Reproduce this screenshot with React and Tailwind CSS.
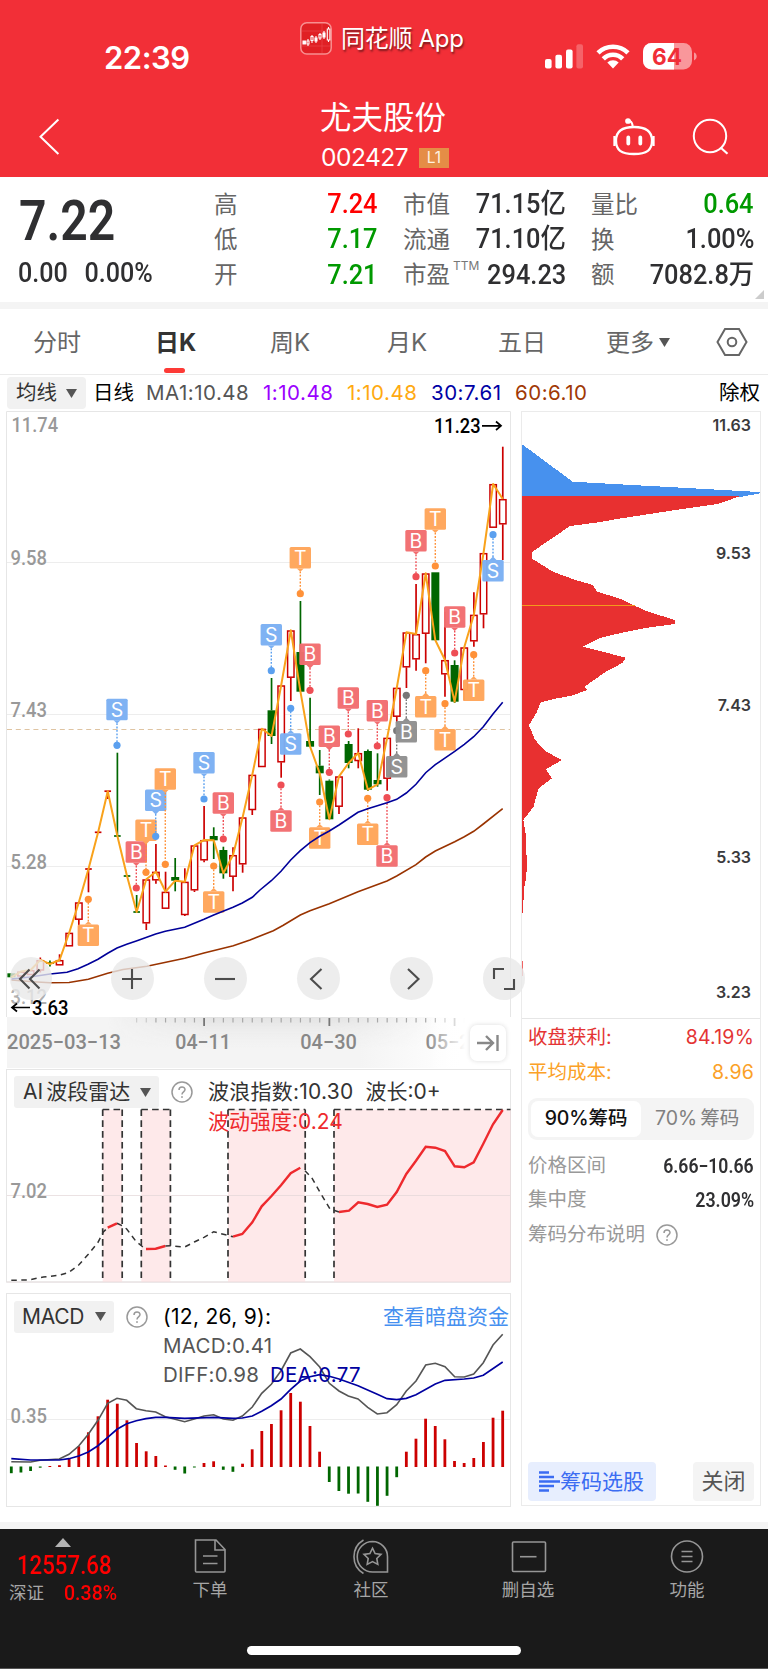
import React from "react";

const NUM = "font-['Roboto','Noto_Sans_CJK_SC',sans-serif] font-medium whitespace-nowrap";
const UI = "font-['Inter','Noto_Sans_CJK_SC',sans-serif]";

const RED = "#cc0000";
const GREEN = "#006600";
const xAt = (i) => 11.4 + i * 9.635;

// [up, body top, body bottom, wick top, wick bottom]
const CANDLES = [
  [0, 973.3, 977.3, 973, 978], [1, 971.5, 976.5, 971, 977], [1, 970, 975, 969, 975], [1, 960, 970.5, 957.5, 972.5],
  [0, 962, 964, 960.5, 966.5], [1, 960, 965.3, 954.3, 965.3], [1, 932.7, 946.3, 932.7, 946.3], [1, 902.3, 919.7, 902.3, 945],
  [1, 869, 869, 869, 892.3], [1, 832.3, 832.3, 832.3, 832.3], [1, 791.2, 791.2, 791.2, 799], [0, 836, 836, 752.7, 836],
  [0, 876, 876, 876, 876], [0, 912, 912, 895, 912], [1, 879.3, 923.3, 879.3, 930], [1, 871.7, 880.3, 844, 883.7],
  [1, 891.7, 908.7, 871.7, 908.7], [0, 877, 880.7, 858, 891.3], [1, 881.7, 915, 868.3, 916], [1, 845.3, 890.3, 845.3, 892],
  [1, 840, 860.3, 806, 862.3], [0, 836, 840.3, 827.3, 859], [0, 850, 873.3, 846.7, 878.7], [1, 855, 876.7, 847.3, 891.3],
  [1, 817.3, 864.3, 817.3, 872.7], [1, 774.7, 810, 774.7, 815], [1, 728.7, 767, 728.7, 767], [0, 710.3, 736, 678, 744],
  [1, 685.3, 762.3, 685.3, 777.7], [1, 630.3, 677.7, 630.3, 701], [0, 652, 691.7, 601, 691.7], [0, 741, 746.7, 697.7, 746.7],
  [0, 765.7, 773.3, 750, 795], [0, 780.7, 819.3, 779.5, 819.3], [1, 776.3, 806.7, 776.3, 814], [0, 744, 763, 741, 768.3],
  [1, 753, 761, 728.3, 768.3], [0, 751, 789.7, 749.5, 791], [0, 780, 784.3, 753.3, 786.7], [1, 737.7, 778.7, 737.7, 790.7],
  [1, 687.7, 716.7, 687.7, 723.3], [1, 632.3, 667.3, 632.3, 688], [1, 634, 659.3, 584, 670.7], [1, 573.3, 633.7, 573.3, 663.3],
  [0, 572.3, 640.3, 572.3, 640.3], [1, 660, 674.3, 611.7, 696.7], [0, 665, 701.7, 660.3, 703], [1, 647.3, 690, 647.3, 700.3],
  [1, 614.7, 641.3, 592.3, 646.7], [1, 553, 614.3, 553, 628.3], [1, 484, 527.7, 484, 527.7], [1, 499, 524.3, 446.7, 560],
];

const MA30 = "11.5,979 30,977 50,974 67,972.3 78,968.7 88,964.3 98,959.3 107.7,953.3 117,948 126.7,944.3 136.3,941 155.7,934 165.3,931.3 184.7,927.3 204,919.3 213.7,915 233,907.3 242.3,903 252.3,897.3 260,890 271.3,880.7 281,871.3 290.7,860 300.3,850.7 310,842.7 319.7,836.3 329.3,831 339,825 358,812.3 367.7,808.7 387,802.7 396.7,799.3 406.3,793 416,784.3 425.7,772.7 435.3,764.7 454.7,751.3 464.3,744.3 473.7,736.7 483.3,726.7 493,714 502.7,702.3";
const MA60 = "11.5,980 33,981.7 50,982.7 69,982.5 88.3,979.3 107.7,973.3 123,969.5 147,966.3 184.7,958.3 204,953 233.3,945.7 250,940 273.3,930.7 283.3,925.3 300.3,915 310,910.7 329.3,903.7 358,891.7 387,881 396.7,876 416,864.7 425.7,857 435.3,851 454.7,841.7 464.3,836.7 473.7,831.3 483.3,824 502.7,808.7";

// [letter, x, label centre y, dot y]
const MARKERS = [
  ["S", 117, 709.5, 745.3], ["T", 88.3, 935.3, 899.3], ["B", 136.3, 852, 888], ["T", 146, 830.3, 872.3], ["S", 155.7, 800.3, 836.3],
  ["T", 165.3, 779, 864.3], ["S", 204, 762.7, 799], ["B", 223.3, 803, 839], ["T", 213.7, 902, 866], ["T", 300.3, 557.7, 593.7],
  ["S", 271.3, 634.7, 670.7], ["B", 310, 654.3, 690.3], ["S", 290.7, 744, 708.3], ["B", 281, 821, 785], ["B", 329.3, 736.3, 772.3],
  ["B", 348.3, 698, 734], ["B", 377.3, 710.7, 746], ["T", 319.7, 838, 802], ["T", 367.7, 834.3, 798.3], ["B", 387, 856, 797.7],
  ["S", 396.7, 766.7, 730.7, 1], ["B", 406.3, 731.7, 695.3, 1], ["B", 416, 540.7, 576.7], ["T", 425.7, 706.7, 670.7],
  ["T", 435.3, 519, 566], ["T", 445, 739.7, 703.7], ["B", 454.7, 617, 653], ["T", 473.7, 690.3, 654.7], ["S", 493, 570.7, 534.7],
];
const MARKER_COLORS = { S: ["#7bb0f3", "#5ba0ef"], B: ["#f26d70", "#ee4e55"], T: ["#ffa55a", "#ff9138"], X: ["#8f8f8f", "#777777"] };

function Marker({ m }) {
  const [l, x, cy, dot, muted] = m;
  const [fill, ink] = MARKER_COLORS[muted ? "X" : l];
  const dir = dot > cy ? 1 : -1;
  const edge = cy + dir * 10.7;
  return (
    <g>
      <line x1={x} x2={x} y1={edge + dir * 3} y2={dot} stroke={ink} strokeWidth="1.4" strokeDasharray="1.8 1.6" />
      <circle cx={x} cy={dot} r="3.6" fill={ink} />
      <path d={`M${x - 3.5} ${edge} L${x} ${edge + dir * 3.4} L${x + 3.5} ${edge} Z`} fill={fill} />
      <rect x={x - 10.7} y={cy - 10.7} width="21.4" height="21.4" rx="1.5" fill={fill} opacity="0.97" />
      <text x={x} y={cy + 7} textAnchor="middle" fontSize="19.5" fill="#fff" fontFamily="Inter">{l}</text>
    </g>
  );
}

function Axis({ x, y, w, children, fill = "#999999" }) {
  return (
    <text x={x} y={y} textLength={w} lengthAdjust="spacingAndGlyphs" fontSize="20.5" fontWeight="500" fontFamily="Roboto" fill={fill}>{children}</text>
  );
}

function PriceChart() {
  return (
    <svg viewBox="6 411 505 606" width="505" height="606" className="block overflow-visible">
      <path d="M6.5 1017 V411.5 H510.5 V1017" fill="none" stroke="#e6e6e6" />
      <path d="M7 562.5 H510 M7 714.5 H510 M7 866.5 H510" stroke="#ededed" />
      <Axis x="11.5" y="431.7" w="46.5">11.74</Axis>
      <Axis x="10.5" y="565.3" w="36.5">9.58</Axis>
      <Axis x="10.5" y="717" w="36.5">7.43</Axis>
      <Axis x="10.5" y="869" w="36.5">5.28</Axis>
      <Axis x="10.5" y="1003.5" w="36.5" fill="#b0b0b0">3.12</Axis>
      <line x1="7" x2="510" y1="729.5" y2="729.5" stroke="#dfc4a2" strokeWidth="1.2" strokeDasharray="5 3.8" />
      {CANDLES.map(([up, t, b, h, l], i) => {
        const x = xAt(i);
        const c = up ? RED : GREEN;
        return (
          <g key={i} stroke={c} strokeWidth="1.7">
            {h < t && <line x1={x} x2={x} y1={h} y2={t} />}
            {l > b && <line x1={x} x2={x} y1={b} y2={l} />}
            {b - t < 1
              ? <line x1={x - 3.3} x2={x + 3.3} y1={t} y2={t} />
              : up
                ? <rect x={x - 3.2} y={t + 0.7} width="6.4" height={b - t - 1.2} fill="#fff" strokeWidth="1.5" />
                : <rect x={x - 4} y={t} width="8" height={b - t} fill={c} stroke="none" />}
          </g>
        );
      })}
      <polyline points={CANDLES.map(([up, t, b], i) => `${xAt(i)},${up ? t : b}`).join(" ")} fill="none" stroke="#f9a21b" strokeWidth="2" strokeLinejoin="round" />
      <polyline points={MA60} fill="none" stroke="#993300" strokeWidth="1.6" />
      {MARKERS.map((m, i) => <Marker key={i} m={m} />)}
      <polyline points={MA30} fill="none" stroke="#000099" strokeWidth="1.6" />
      <g stroke="#000" strokeWidth="1.7" fill="none">
        <path d="M30 1007.5 H12 M17 1003.5 L12 1007.5 L17 1011.5" />
        <path d="M482 425.8 H501 M496 421.5 L501 425.8 L496 430" />
      </g>
      <Axis x="32" y="1014.7" w="36.5" fill="#000">3.63</Axis>
      <Axis x="434" y="433" w="46.5" fill="#000">11.23</Axis>
    </svg>
  );
}

function RoundButton({ children, className = "" }) {
  return (
    <button className={`flex h-[42.6px] w-[42.6px] shrink-0 items-center justify-center rounded-full bg-[#e9e9e9]/80 ${className}`}>
      <svg width="42" height="42" viewBox="-21 -21 42 42" fill="none" stroke="#4c4c4c" strokeWidth="2.1">{children}</svg>
    </button>
  );
}

function DateStrip() {
  return (
    <div className="relative h-[51px] w-[505px] overflow-hidden pl-px">
      <svg width="504" height="51" viewBox="7 1017 504 51" className="block">
        <defs>
          <linearGradient id="strip" x1="0" x2="1" y1="0" y2="0">
            <stop offset="0" stopColor="#f4f4f4" /><stop offset="0.7" stopColor="#f4f4f4" /><stop offset="0.9" stopColor="#fff" />
          </linearGradient>
          <linearGradient id="shade" x1="0" x2="0" y1="0" y2="1">
            <stop offset="0" stopColor="#e2e2e2" /><stop offset="1" stopColor="#f0f0f0" stopOpacity="0" />
          </linearGradient>
          <linearGradient id="side" x1="0" x2="1" y1="0" y2="0">
            <stop offset="0.2" stopColor="#000" /><stop offset="0.4" stopColor="#fff" /><stop offset="0.65" stopColor="#fff" /><stop offset="0.85" stopColor="#000" />
          </linearGradient>
          <mask id="sideMask"><rect x="7" y="1017" width="504" height="51" fill="url(#side)" /></mask>
          <linearGradient id="fade" x1="0" x2="1" y1="0" y2="0">
            <stop offset="0" stopColor="#fff" stopOpacity="0" /><stop offset="0.85" stopColor="#fff" /><stop offset="1" stopColor="#fff" />
          </linearGradient>
        </defs>
        <rect x="7" y="1017" width="504" height="51" fill="url(#strip)" />
        <rect x="7" y="1017" width="504" height="32" fill="url(#shade)" mask="url(#sideMask)" />
        {Array.from({ length: 35 }, (_, k) => k + 13).map((i) => {
          const major = i === 20 || i === 33 || i === 46;
          return <line key={i} x1={xAt(i)} x2={xAt(i)} y1="1018" y2={major ? 1026 : 1022.5} stroke={major ? "#777" : "#a8a8a8"} strokeWidth={major ? 1.8 : 1.2} opacity={i < 15 ? 0.5 : 1} />;
        })}
        <Axis x="7" y="1048.7" w="114" fill="#888">2025−03−13</Axis>
        <Axis x="175.3" y="1048.7" w="55.5" fill="#888">04−11</Axis>
        <Axis x="300.3" y="1048.7" w="56.5" fill="#888">04−30</Axis>
        <Axis x="425.5" y="1048.7" w="56.5" fill="#888">05−22</Axis>
        <rect x="426" y="1017" width="46" height="51" fill="url(#fade)" />
        <rect x="466" y="1017" width="45" height="51" fill="#fff" />
      </svg>
      <button className="absolute right-[5px] top-[8px] flex h-9 w-9 items-center justify-center rounded-[7px] bg-white shadow-[0_0_5px_rgba(0,0,0,0.14)]">
        <svg width="24" height="20" viewBox="0 0 24 20" fill="none" stroke="#888" strokeWidth="2.4"><path d="M1 10 H17 M10 3 L17 10 L10 17 M21.5 2 V18" /></svg>
      </button>
    </div>
  );
}

const DASHED = ["11.3,1280.3 28.3,1280 43.3,1277 59.3,1275.3 69,1272.3 78.7,1265 88.3,1254.3 98,1242.3 103.3,1232 107.7,1227.7", "117,1223.3 122,1225.7 126.7,1229 136.3,1241.7 141.7,1246 146,1249", "165.3,1246 170.3,1245.7 184.7,1247 194.3,1242 204,1237.3 213.7,1231.7 223.3,1234.3 233,1236.7", "305,1170.7 311.7,1177.7 319.7,1191.7 330,1209 339,1212"];
const WAVES = ["107.7,1227.7 117,1223.3", "146,1249 155.7,1248.7 165.3,1246", "233,1236.7 242.3,1234 252.3,1222.3 261.7,1206.3 271.3,1196.3 281,1185.3 290.7,1173.3 300.3,1167.7", "339,1212 349,1210.7 358.3,1202.3 367.7,1204 377.3,1207 387,1204.7 396.7,1192 406.3,1174 416,1160.7 425.7,1146.7 435.3,1147.7 445,1151 454.7,1166.3 464.3,1167.3 473.7,1162.3 483.3,1143.7 493,1124.3 502.7,1110"];
const BANDS = [[102.7, 122.2], [141.3, 170.4], [228, 305.2], [334, 510.5]];

function RadarChart() {
  return (
    <svg viewBox="6 1069 505 214" width="505" height="214" className="absolute inset-0">
      <rect x="6.5" y="1069.5" width="504" height="212.5" fill="none" stroke="#e6e6e6" />
      {BANDS.map(([a, b]) => <rect key={a} x={a} y="1109.5" width={b - a} height="172.5" fill="#fee9ea" />)}
      <path d="M7 1195.5 H510 M6.5 1282 H510.5 V1109" stroke="#e2d6d7" strokeOpacity="0.7" fill="none" />
      <g stroke="#333" strokeWidth="1.7" strokeDasharray="6.6 4.2" fill="none">
        {BANDS.map(([a, b], i) => (
          <g key={a}>
            <path d={`M${a} 1109.5 H${b}`} />
            <path d={`M${a} 1109.5 V1282`} />
            {i < 3 && <path d={`M${b} 1109.5 V1282`} />}
          </g>
        ))}
      </g>
      {DASHED.map((p) => <polyline key={p} points={p} fill="none" stroke="#333" strokeWidth="1.5" strokeDasharray="5.5 4.5" />)}
      {WAVES.map((p) => <polyline key={p} points={p} fill="none" stroke="#ee2a2e" strokeWidth="2.4" />)}
      <Axis x="10.5" y="1198.3" w="36.5">7.02</Axis>
    </svg>
  );
}

const BARS = [-6.7, -6, -4.5, -1.2, 1, 1.8, 8, 20.7, 34.7, 50.7, 67.3, 63.3, 46.7, 24, 15.7, 11, 1.5, -3.3, -7, -1, 4, 5.7, -3.3, -5.3, 3.3, 17.7, 36, 43, 56.7, 74, 65.3, 41, 15.3, -15.5, -24.5, -27.2, -27, -35.3, -39.3, -29.3, -10.7, 15.3, 28.3, 48.3, 41, 27.7, 6, 4, 9, 25, 49.3, 56.3];
const DIFF = "11.3,1461.7 30.7,1462 40,1460.3 59.3,1459 69,1454.3 78.7,1446 88.3,1434.3 98,1420.3 107.7,1403.3 117,1398.3 126.7,1400.3 136.3,1408.7 146,1410.7 155.7,1412 165.3,1416.7 184.7,1421.7 194.3,1419 204,1416 213.7,1414.7 223.3,1419 233,1420.3 242.3,1416 252.3,1407 261.7,1393.3 271.3,1384.3 281,1370.7 290.7,1353 300.3,1349 310,1356.7 319.7,1367 329.3,1383.3 339,1391 348.3,1396 358,1399 367.7,1407.3 377.3,1414 387,1412.7 396.7,1404.7 406.3,1391 416,1381 425.7,1365 435.3,1363.3 445,1366.7 454.7,1376.7 464.3,1377 473.7,1374 483.3,1362.7 493,1345 502.7,1334.3";
const DEA = "11.3,1458.7 30.7,1460 59.3,1460 69,1458.7 78.7,1456 88.3,1452 98,1445.7 107.7,1437.3 117,1429.3 126.7,1423.7 136.3,1420.7 146,1418.7 155.7,1417.3 165.3,1417.3 184.7,1418.3 213.7,1417.3 233,1418.3 242.3,1418 252.3,1416 261.7,1411.3 271.3,1405.7 281,1399 290.7,1389.3 300.3,1381 310,1376.7 319.7,1374.7 329.3,1376.3 339,1379 358,1385.7 377.3,1394.3 387,1398.7 396.7,1399.7 406.3,1398.3 416,1394.7 435.3,1384 445,1380.3 464.3,1379 473.7,1378 483.3,1375.3 502.7,1362";

function MacdChart() {
  return (
    <svg viewBox="6 1293 505 214" width="505" height="214" className="absolute inset-0">
      <rect x="6.5" y="1293.5" width="504" height="213" fill="none" stroke="#e6e6e6" />
      <path d="M7 1419.5 H510" stroke="#ededed" />
      <Axis x="10.5" y="1423" w="36.5">0.35</Axis>
      {BARS.map((v, i) => (
        <rect key={i} x={xAt(i) - 1.5} y={v > 0 ? 1467 - v : 1466.5} width="2.8" height={Math.abs(v)} fill={v > 0 ? RED : GREEN} />
      ))}
      <polyline points={DIFF} fill="none" stroke="#555" strokeWidth="1.6" />
      <polyline points={DEA} fill="none" stroke="#0000a0" strokeWidth="1.7" />
    </svg>
  );
}

function Down({ className = "" }) {
  return <svg width="11" height="9" viewBox="0 0 11 9" className={`shrink-0 ${className}`}><path d="M0 0 H11 L5.5 9 Z" fill="#555" /></svg>;
}

function Help() {
  return (
    <svg width="22" height="22" viewBox="0 0 22 22" fill="none" stroke="#999" strokeWidth="1.5" className="shrink-0">
      <circle cx="11" cy="11" r="10" />
      <path d="M8 8.9 C8 5 14 5 14 8.6 C14 10.8 11 11 11 13.4" /><circle cx="11" cy="16" r="0.6" fill="#999" strokeWidth="0.8" />
    </svg>
  );
}

function ChipChart() {
  return (
    <svg viewBox="36 28 715 1534" preserveAspectRatio="none" width="238.3" height="606.5" className="absolute -top-px left-0" shapeRendering="crispEdges">
      <polygon fill="#4791ee" points="36,112 190,208 235,209 320,213 406,217 493,221 579,225 665,229 751,233 751,236 688,246 36,246" />
      <polygon fill="#e83030" points="36,244 688,244 625,263 540,273 485,280 400,291 345,298 260,310 180,319 67,384 67,402 130,435 195,455 248,468 262,485 335,504 400,531 494,557 494,567 420,575 345,587 270,602 218,624 348,652 338,665 290,686 224,725 231,734 185,748 140,755 92,765 80,790 57,823 75,860 110,890 155,911 108,934 126,957 86,982 70,1030 40,1062 47,1098 51,1180 48,1210 41,1240 40,1298 36,1298" />
      <rect x="36" y="1420" width="3" height="38" fill="#f06464" />
      <rect x="36" y="517.5" width="338" height="3.6" fill="#f39a1c" />
    </svg>
  );
}

function StatusBar() {
  return (
    <div className="flex h-[76px] items-start">
      <div className="w-[200px] shrink-0 pl-[104px] pt-[38.5px] text-[31px] font-semibold leading-[38px] tracking-[-0.5px]">22:39</div>
      <div className="flex w-[345px] pl-[100px] pt-[22px]">
        <svg width="32" height="33" viewBox="0 0 32 33" fill="none">
          <rect x="0.8" y="0.8" width="30.4" height="31.2" rx="6" fill="#e02024" stroke="#f88f90" strokeWidth="1.5" />
          <path d="M2 9 H30 M2 24 H30 M22 2 V31" stroke="#ea4547" strokeWidth="0.7" />
          <g stroke="#fff" strokeWidth="1.1">
            <path d="M8 17 V24 M12 13 V21 M16 14 V21 M20 11 V18 M24 9 V17 M28.5 5 V20" />
            <path d="M3 19 h2.4 v3 h-2.4z M15 16 h2 v3 h-2z M23 11 h2 v4 h-2z" fill="#fff" />
            <path d="M7 19 h2 v3 h-2z M11 14.5 h2 v4 h-2z M19 12.5 h2 v3.5 h-2z M27.3 7 h2.6 v11 h-2.6z" fill="#e02024" />
          </g>
        </svg>
        <span className="ml-[9px] whitespace-nowrap text-[24px] leading-[33px] tracking-[-0.3px] [text-shadow:1px_2px_2px_rgba(0,0,0,0.5)]">同花顺 App</span>
      </div>
      <svg width="155" height="30" viewBox="545 41 155 30" className="mt-[41px]">
        <g fill="#fff">
          <rect x="545" y="59" width="6.6" height="9.6" rx="2" /><rect x="555.4" y="54.7" width="6.6" height="13.9" rx="2" />
          <rect x="566" y="49.6" width="6.6" height="19" rx="2" /><rect x="576.4" y="44.3" width="6.6" height="24.3" rx="2" opacity="0.25" />
        </g>
        <g fill="none" stroke="#fff" strokeWidth="4.6">
          <path d="M598 52.9 A21.5 21.5 0 0 1 628 52.9" /><path d="M603.3 58.8 A13.5 13.5 0 0 1 622.7 58.8" />
        </g>
        <path d="M607.3 62.6 A8.2 8.2 0 0 1 618.7 62.6 L613 68.6 Z" fill="#fff" />
        <clipPath id="batt"><rect x="643" y="43" width="49" height="26.4" rx="8.5" /></clipPath>
        <g clipPath="url(#batt)"><rect x="643" y="43" width="49" height="27" fill="#f9979b" /><rect x="643" y="43" width="31" height="27" fill="#fff" /></g>
        <path d="M694 52.6 C697.6 53.8 697.6 59 694 60.4 Z" fill="#f9979b" />
        <text x="667" y="64.5" textAnchor="middle" fontFamily="Inter" fontWeight="700" fontSize="23.5" textLength="30" lengthAdjust="spacingAndGlyphs" fill="#f02e37">64</text>
      </svg>
    </div>
  );
}

function TitleBar() {
  return (
    <div className="flex h-[101px] items-start">
      <svg width="60" height="40" viewBox="0 0 60 40" className="mt-[40px] shrink-0" fill="none" stroke="#fff" strokeWidth="2"><path d="M58.4 3.5 L40.5 20.8 L58.4 38" /></svg>
      <div className="ml-[260px] w-[130px] pt-[21px]">
        <div className="whitespace-nowrap text-[31.5px] leading-[42px]">尤夫股份</div>
        <div className="flex items-center pl-px">
          <span className="w-[98px] text-[24.5px] leading-[37px] tracking-[-0.5px]">002427</span>
          <span className="flex h-5 w-[30px] shrink-0 items-center justify-center bg-[#e58d46] text-[15.5px] text-[#fff3e0]">L1</span>
        </div>
      </div>
      <svg width="120" height="50" viewBox="610 111 120 50" className="ml-[160px] mt-[35px] shrink-0" fill="none" stroke="#fff" strokeWidth="2.3">
        <path d="M626.5 121.8 c1.5 -2.6 6 -1 6.2 4.8" strokeWidth="2" /><circle cx="628" cy="121" r="1.7" fill="#fff" />
        <path d="M634 127 C646 127 652 132 652 140.5 C652 150 647 154 634 154 C621 154 616 150 616 140.5 C616 132 622 127 634 127 Z" />
        <path d="M614.5 136 V146 M653.5 136 V146" /><path d="M628.3 137.5 V143.5 M640.3 137.5 V143.5" strokeWidth="3.8" strokeLinecap="round" />
        <circle cx="710" cy="136" r="16.2" strokeWidth="2" /><path d="M720.5 147.5 L727.5 153.8" strokeWidth="2.2" />
      </svg>
    </div>
  );
}

function StatColumn({ rows, className }) {
  return (
    <div className={`flex flex-col ${className}`}>
      {rows.map(([label, value, color, sup]) => (
        <div key={label} className="flex h-[35.3px] items-center justify-between">
          <span className="relative mt-[1px] whitespace-nowrap text-[23.5px] text-[#666]">{label}
            {sup && <sup className="absolute left-[50px] top-[3px] text-[12px] leading-none tracking-[0px] text-[#777]">{sup}</sup>}
          </span>
          <span className={`${NUM} mt-px origin-right scale-x-[0.94] text-[27px] ${color}`}>{value}</span>
        </div>
      ))}
    </div>
  );
}

function Quote() {
  return (
    <section className="relative flex h-[125px] bg-white">
      <div className="w-[195px] pl-[19px] text-[#2f2f31]">
        <div className={`${NUM} mt-[12px] w-[110px] origin-left scale-x-[0.86] !font-semibold text-[56px] leading-[64px]`}>7.22</div>
        <div className={`${NUM} mt-[1.5px] -ml-px flex origin-left scale-x-[0.93] gap-[18px] text-[27px] leading-[36px]`}><span>0.00</span><span>0.00%</span></div>
      </div>
      <StatColumn className="ml-[19px] mt-[9px] w-[164px]" rows={[["高", "7.24", "text-[#ff0000]"], ["低", "7.17", "text-[#009900]"], ["开", "7.21", "text-[#009900]"]]} />
      <StatColumn className="ml-[25px] mt-[9px] w-[163px]" rows={[["市值", "71.15亿", "text-[#2f2f31]"], ["流通", "71.10亿", "text-[#2f2f31]"], ["市盈", "294.23", "text-[#2f2f31]", "TTM"]]} />
      <StatColumn className="ml-[25px] mt-[9px] w-[163px]" rows={[["量比", "0.64", "text-[#009900]"], ["换", "1.00%", "text-[#2f2f31]"], ["额", "7082.8万", "text-[#2f2f31]"]]} />
      <svg width="9" height="9" className="absolute bottom-[3px] right-[4px]"><path d="M9 0 V9 H0 Z" fill="#ccc" /></svg>
    </section>
  );
}

function Tabs() {
  return (
    <nav className="flex h-[65px] items-center pt-[2px] text-[24px] text-[#666] [&>span]:shrink-0 [&>span]:whitespace-nowrap">
      <span className="w-[122px] pl-[33px]">分时</span>
      <span className="relative flex h-full w-[148px] items-center pl-[33px] font-bold text-[#333]">日K
        <i className="absolute bottom-[1px] left-[42px] h-[5px] w-[21px] rounded-full bg-[#fd3a36]" />
      </span>
      <span className="w-[117px]">周K</span>
      <span className="w-[111px]">月K</span>
      <span className="w-[108px]">五日</span>
      <span className="flex w-[110px] items-center">更多<Down className="ml-[5px]" /></span>
      <svg width="32" height="30" viewBox="0 0 32 30" fill="none" stroke="#666" strokeWidth="2" className="-mt-px"><path d="M9 2 H23 L30.5 15 L23 28 H9 L1.5 15 Z" /><circle cx="16" cy="15" r="4.3" /></svg>
    </nav>
  );
}

function MaRow() {
  return (
    <div className="flex h-[36px] items-center border-t border-[#ebebeb] pl-[7px] pt-px text-[20.5px] [&>span]:shrink-0 [&>span]:whitespace-nowrap">
      <button className="flex h-8 w-[79px] shrink-0 items-center rounded-[4px] bg-[#f1f1f1] pl-[9px] text-[#333]">均线<Down className="ml-[9px]" /></button>
      <span className="w-[53px] pl-[7px] text-black">日线</span>
      <span className="w-[117px] pl-[7px] tracking-[0.5px] text-[#555]">MA1:10.48</span>
      <span className="w-[84px] pl-[7px] tracking-[0.5px] text-[#9a00ff]">1:10.48</span>
      <span className="w-[84px] pl-[7px] tracking-[0.5px] text-[#ffaa11]">1:10.48</span>
      <span className="w-[84px] pl-[7px] tracking-[0.5px] text-[#0000a5]">30:7.61</span>
      <span className="w-[204px] pl-[7px] tracking-[0.5px] text-[#a03805]">60:6.10</span>
      <span className="pl-[7px] text-black">除权</span>
    </div>
  );
}

function SidePanel() {
  return (
    <aside className="relative flex h-[1095px] w-[240px] shrink-0 flex-col border border-[#ebebeb] bg-white">
      <div className="relative h-[606.5px] border-b border-[#e6e6e6]">
        <ChipChart />
        <div className="relative flex h-full flex-col pr-[9px] text-right text-[16px] font-semibold leading-5 text-[#3a3a3c]">
          <span className="mt-[2.5px]">11.63</span><span className="mt-[108px]">9.53</span><span className="mt-[132px]">7.43</span><span className="mt-[132px]">5.33</span><span className="mt-[115.5px]">3.23</span>
        </div>
      </div>
      <div className="flex flex-1 flex-col px-[6px] text-[19.5px]">
        <div className="mt-[2px] flex h-[34.5px] items-center justify-between text-[#e43434]"><span>收盘获利:</span><span className="tracking-[0.2px]">84.19%</span></div>
        <div className="flex h-[34.5px] items-center justify-between text-[#fba127]"><span>平均成本:</span><span className="tracking-[0.2px]">8.96</span></div>
        <div className="mt-[8.5px] flex h-[42px] items-center rounded-[9px] bg-[#f4f4f4] p-[3px]">
          <span className="flex h-9 w-[110px] items-center justify-center whitespace-nowrap rounded-[7px] bg-white font-medium tracking-[-0.1px] text-[#111]">90%筹码</span>
          <span className="flex-1 whitespace-nowrap pl-[14px] text-[#808080]">70%<span className="ml-[3px]">筹码</span></span>
        </div>
        <div className="mt-[9px] flex h-[34px] items-center justify-between text-[#999]"><span>价格区间</span><span className={`${NUM} origin-right scale-x-[0.88] text-[20px] !font-semibold text-[#2f2f31]`}>6.66−10.66</span></div>
        <div className="flex h-[34px] items-center justify-between text-[#999]"><span>集中度</span><span className={`${NUM} origin-right scale-x-[0.89] text-[20px] !font-semibold text-[#2f2f31]`}>23.09%</span></div>
        <div className="flex h-[36px] items-center gap-[11px] text-[#999]"><span>筹码分布说明</span><Help /></div>
        <div className="mb-[4px] mt-auto flex justify-between">
          <button className="flex h-[39px] w-[128px] items-center whitespace-nowrap rounded-[4px] bg-[#e7eefe] pl-[10px] text-[21px] text-[#3b6cf2]">
            <svg width="22" height="21" viewBox="0 0 22 21" className="shrink-0" stroke="#3b6cf2" strokeWidth="2.6"><path d="M1 1.5 H11 M1 6 H16 M1 10.5 H22 M1 15 H16 M1 19.5 H11" /></svg>筹码选股
          </button>
          <button className="h-[39px] w-[61px] rounded-[4px] bg-[#f4f4f4] text-[22px] text-[#555]">关闭</button>
        </div>
      </div>
    </aside>
  );
}

function FooterItem({ label, className, children }) {
  return (
    <div className={`flex shrink-0 flex-col items-center pt-[9px] text-[17.5px] leading-[25px] text-[#a6a6a6] ${className}`}>
      <svg width="38" height="36" viewBox="0 0 38 36" fill="none" stroke="#969696" strokeWidth="1.6">{children}</svg>
      <span className="mt-[3px] whitespace-nowrap">{label}</span>
    </div>
  );
}

function Footer() {
  return (
    <footer className="h-[140px] border-b border-[#555] bg-[#1a1a1a]">
      <div className="flex h-[117px]">
        <div className="w-[130px] shrink-0">
          <svg width="16" height="9" className="ml-[55px] mt-[9px] block"><path d="M8 0 L16 9 H0 Z" fill="#b4b4b4" /></svg>
          <div className={`${NUM} mt-[4px] origin-left scale-x-[0.89] pl-[19px] text-[25px] leading-[30px] text-[#ff0000]`}>12557.68</div>
          <div className="flex items-center leading-[24px]">
            <span className="ml-[9px] w-[55px] text-[17.5px] text-[#a6a6a6]">深证</span>
            <span className={`${NUM} origin-left scale-x-[0.93] text-[21px] text-[#ff0000]`}>0.38%</span>
          </div>
        </div>
        <FooterItem label="下单" className="ml-[30px] w-[100px]">
          <path d="M4.5 2 H25 L34 11.5 V33 Q34 34 33 34 H5.5 Q4.5 34 4.5 33 Z M24 2 V12 H34 M12 18 H26.5 M12 25.5 H26.5" />
        </FooterItem>
        <FooterItem label="社区" className="ml-[61px] w-[100px]">
          <path d="M20.5 3.5 A15.2 15.2 0 0 0 20.5 34 H35.5 V19 A15.2 15.2 0 0 0 20.5 3.5 Z M11.5 2 A19.5 19.5 0 0 0 11.5 35.5" />
          <path d="M20.5 10.2 L23.1 15.5 L29 16.4 L24.8 20.5 L25.8 26.4 L20.5 23.6 L15.2 26.4 L16.2 20.5 L12 16.4 L17.9 15.5 Z" />
        </FooterItem>
        <FooterItem label="删自选" className="ml-[57px] w-[100px]">
          <rect x="3.5" y="4" width="33" height="29.5" rx="1" /><path d="M11 18.7 H27.5" />
        </FooterItem>
        <FooterItem label="功能" className="ml-[59px] w-[100px]">
          <circle cx="19" cy="18.5" r="15.5" /><path d="M13.5 13.5 H24.5 M13.5 18.5 H24.5 M13.5 23.5 H24.5" />
        </FooterItem>
      </div>
      <div className="mx-auto h-[9px] w-[274px] rounded-full bg-white" />
    </footer>
  );
}

export default function App() {
  return (
    <div className={`${UI} flex h-[1669px] w-[768px] flex-col overflow-hidden bg-white`}>
      <header className="h-[177px] shrink-0 bg-[#f22f37] text-white">
        <StatusBar />
        <TitleBar />
      </header>
      <Quote />
      <div className="h-[7px] shrink-0 bg-[#f4f4f4]" />
      <Tabs />
      <MaRow />
      <main className="flex h-[1112px] shrink-0 gap-[10px] pl-[6px] pt-px">
        <div className="relative z-10 flex w-[505px] shrink-0 flex-col">
          <div className="relative h-[606px]">
            <PriceChart />
            <div className="absolute bottom-[17px] left-[3.5px] flex">
              <RoundButton><path d="M-1.5 -9.5 L-11 0 L-1.5 9.5 M8.5 -9.5 L-1 0 L8.5 9.5" /></RoundButton>
              <RoundButton className="ml-[59px]"><path d="M-10 0 H10 M0 -10 V10" /></RoundButton>
              <RoundButton className="ml-[50.5px]"><path d="M-10 0 H10" /></RoundButton>
              <RoundButton className="ml-[50.3px]"><path d="M3.5 -10 L-7 0 L3.5 10" /></RoundButton>
              <RoundButton className="ml-[50.3px]"><path d="M-3 -10 L7.5 0 L-3 10" /></RoundButton>
              <RoundButton className="ml-[50.3px]"><path d="M-10 0 V-10 H0 M10 0 V10 H0" /></RoundButton>
            </div>
          </div>
          <DateStrip />
          <div className="relative mt-px h-[214px]">
            <RadarChart />
            <div className="relative flex h-[46px] items-center pl-[8px] text-[21px] text-[#333]">
              <button className="flex h-8 w-[145px] shrink-0 items-center whitespace-nowrap rounded-[3px] bg-[#f1f1f1] pl-[9px]">AI<span className="ml-[3px]">波段雷达</span><Down className="ml-[10px]" /></button>
              <div className="ml-[12px]"><Help /></div>
              <span className="ml-[15px] whitespace-nowrap tracking-[0.25px]">波浪指数:10.30</span>
              <span className="ml-[12px] whitespace-nowrap">波长:0+</span>
            </div>
            <div className="relative -mt-[7px] pl-[202px] text-[21px] leading-[28px] text-[#ee2a2e]">波动强度:0.24</div>
          </div>
          <div className="relative mt-[10px] h-[214px]">
            <MacdChart />
            <div className="relative flex h-[47px] items-center pl-[8px] text-[21px] text-[#333]">
              <button className="flex h-8 w-[100px] shrink-0 items-center rounded-[3px] bg-[#f1f1f1] pl-[8px] tracking-[-0.3px]">MACD<Down className="ml-[11px]" /></button>
              <div className="ml-[12px]"><Help /></div>
              <span className="ml-[15px] whitespace-nowrap tracking-[0.3px] text-black">(12, 26, 9):</span>
              <a className="ml-auto mr-[2px] text-[#4690f0]">查看暗盘资金</a>
            </div>
            <div className="relative pl-[157px] text-[20.5px] leading-[28.5px] tracking-[0.25px] text-[#555]">
              <div className="-mt-[8px]">MACD:0.41</div>
              <div className="flex"><span className="w-[107px]">DIFF:0.98</span><span className="text-[#0000a0]">DEA:0.77</span></div>
            </div>
          </div>
        </div>
        <SidePanel />
      </main>
      <div className="h-[7px] shrink-0 bg-[#f4f4f4]" />
      <Footer />
    </div>
  );
}
